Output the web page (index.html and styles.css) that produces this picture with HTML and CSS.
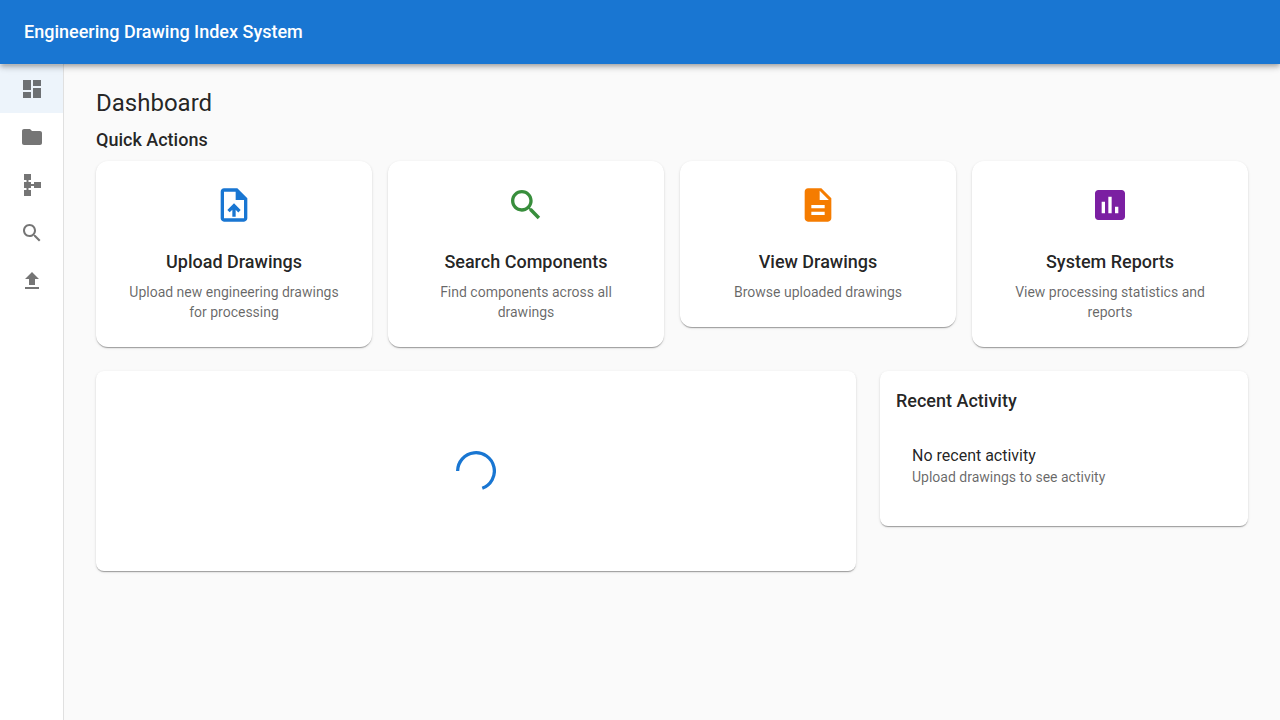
FILE: index.html
```html
<!DOCTYPE html>
<html lang="en">
<head>
  <meta charset="utf-8">
  <meta name="viewport" content="width=device-width, initial-scale=1">
  <title>Engineering Drawing Index System</title>
  <link rel="stylesheet" href="styles.css">
</head>
<body>
  <div class="app">
    <header class="app-bar">Engineering Drawing Index System</header>
    <div class="body">
      <nav class="sidebar" aria-label="Main">
        <a class="nav-item nav-item--active" href="#dashboard" aria-label="Dashboard">
          <svg class="nav-icon" viewBox="0 0 24 24"><path d="M3 13h8V3H3v10zm0 8h8v-6H3v6zm10 0h8V11h-8v10zm0-18v6h8V3h-8z"/></svg>
        </a>
        <a class="nav-item" href="#drawings" aria-label="Drawings">
          <svg class="nav-icon" viewBox="0 0 24 24"><path d="M10 4H4c-1.1 0-1.99.9-1.99 2L2 18c0 1.1.9 2 2 2h16c1.1 0 2-.9 2-2V8c0-1.1-.9-2-2-2h-8l-2-2z"/></svg>
        </a>
        <a class="nav-item" href="#flows" aria-label="Flows">
          <svg class="nav-icon" viewBox="0 0 24 24"><path d="M14 9v2h-3V9H8.5V7H11V1H4v6h2.5v2H4v6h2.5v2H4v6h7v-6H8.5v-2H11v-2h3v2h7V9h-7z"/></svg>
        </a>
        <a class="nav-item" href="#search" aria-label="Search">
          <svg class="nav-icon" viewBox="0 0 24 24"><path d="M15.5 14h-.79l-.28-.27C15.41 12.59 16 11.11 16 9.5 16 5.91 13.09 3 9.5 3S3 5.91 3 9.5 5.91 16 9.5 16c1.61 0 3.09-.59 4.23-1.57l.27.28v.79l5 4.99L20.49 19l-4.99-5zm-6 0C7.01 14 5 11.99 5 9.5S7.01 5 9.5 5 14 7.01 14 9.5 11.99 14 9.5 14z"/></svg>
        </a>
        <a class="nav-item" href="#upload" aria-label="Upload">
          <svg class="nav-icon" viewBox="0 0 24 24"><path d="M5 20h14v-2H5v2zm0-10h4v6h6v-6h4l-7-7-7 7z"/></svg>
        </a>
      </nav>

      <main class="main">
        <h1 class="page-title">Dashboard</h1>
        <h2 class="heading">Quick Actions</h2>

        <div class="actions">
          <a class="action" href="#upload">
            <svg class="action-icon action-icon--blue" viewBox="0 0 24 24"><path d="M14 2H6c-1.1 0-1.99.9-1.99 2L4 20c0 1.1.89 2 1.99 2H18c1.1 0 2-.9 2-2V8l-6-6zm4 18H6V4h7v5h5v11zM8 15.01l1.41 1.41L11 14.84V19h2v-4.16l1.59 1.59L16 15.01 12.01 11 8 15.01z"/></svg>
            <span class="action-title">Upload Drawings</span>
            <span class="caption">Upload new engineering drawings for processing</span>
          </a>
          <a class="action" href="#search">
            <svg class="action-icon action-icon--green" viewBox="0 0 24 24"><path d="M15.5 14h-.79l-.28-.27C15.41 12.59 16 11.11 16 9.5 16 5.91 13.09 3 9.5 3S3 5.91 3 9.5 5.91 16 9.5 16c1.61 0 3.09-.59 4.23-1.57l.27.28v.79l5 4.99L20.49 19l-4.99-5zm-6 0C7.01 14 5 11.99 5 9.5S7.01 5 9.5 5 14 7.01 14 9.5 11.99 14 9.5 14z"/></svg>
            <span class="action-title">Search Components</span>
            <span class="caption">Find components across all drawings</span>
          </a>
          <a class="action" href="#drawings">
            <svg class="action-icon action-icon--orange" viewBox="0 0 24 24"><path d="M14 2H6c-1.1 0-1.99.9-1.99 2L4 20c0 1.1.89 2 1.99 2H18c1.1 0 2-.9 2-2V8l-6-6zm2 16H8v-2h8v2zm0-4H8v-2h8v2zm-3-5V3.5L18.5 9H13z"/></svg>
            <span class="action-title">View Drawings</span>
            <span class="caption">Browse uploaded drawings</span>
          </a>
          <a class="action" href="#reports">
            <svg class="action-icon action-icon--purple" viewBox="0 0 24 24"><path d="M19 3H5c-1.1 0-2 .9-2 2v14c0 1.1.9 2 2 2h14c1.1 0 2-.9 2-2V5c0-1.1-.9-2-2-2zM9 17H7v-7h2v7zm4 0h-2V7h2v10zm4 0h-2v-4h2v4z"/></svg>
            <span class="action-title">System Reports</span>
            <span class="caption">View processing statistics and reports</span>
          </a>
        </div>

        <div class="panels">
          <section class="panel panel--loading" aria-busy="true">
            <svg class="spinner" viewBox="22 22 44 44" role="img" aria-label="Loading"><path d="M23.8 44A20.2 20.2 0 1 1 50.9 63"/></svg>
          </section>
          <section class="panel panel--activity">
            <h2 class="heading">Recent Activity</h2>
            <ul class="activity-list">
              <li class="activity">
                <span class="activity-title">No recent activity</span>
                <span class="caption">Upload drawings to see activity</span>
              </li>
            </ul>
          </section>
        </div>
      </main>
    </div>
  </div>
</body>
</html>
```
FILE: styles.css
```css
* {
  box-sizing: border-box;
}

body {
  margin: 0;
  background: #fafafa;
  color: rgba(0, 0, 0, 0.87);
  font-family: Roboto, "Liberation Sans", sans-serif;
  font-size: 16px;
  line-height: 24px;
  -webkit-font-smoothing: antialiased;
}

.app {
  display: flex;
  flex-direction: column;
  min-height: 100vh;
}

.app-bar {
  position: relative;
  z-index: 1;
  padding: 18px 24px;
  background: #1976d2;
  color: #fff;
  font-size: 18px;
  font-weight: 500;
  line-height: 28px;
  box-shadow: 0 2px 4px -1px rgba(0, 0, 0, 0.2),
    0 4px 5px 0 rgba(0, 0, 0, 0.14),
    0 1px 10px 0 rgba(0, 0, 0, 0.12);
}

.body {
  display: flex;
  flex: 1;
}

.sidebar {
  flex: none;
  width: 64px;
  padding-top: 1px;
  background: #fff;
  border-right: 1px solid rgba(0, 0, 0, 0.12);
}

.nav-item {
  display: flex;
  padding: 12px 20px;
}

.nav-item--active {
  background: rgba(25, 118, 210, 0.08);
}

.nav-icon {
  flex: none;
  width: 24px;
  height: 24px;
  fill: rgba(0, 0, 0, 0.54);
}

.main {
  flex: 1;
  min-width: 0;
  padding: 24px 32px;
}

.page-title {
  margin: 0 0 8px;
  font-size: 24px;
  font-weight: 400;
  line-height: 30px;
}

.heading {
  margin: 0;
  font-size: 18px;
  font-weight: 500;
  line-height: 28px;
}

.actions {
  display: grid;
  grid-template-columns: repeat(4, 1fr);
  align-items: start;
  gap: 16px;
  margin: 7px 0 24px;
}

.action,
.panel {
  background: #fff;
  box-shadow: 0 2px 1px -1px rgba(0, 0, 0, 0.2),
    0 1px 1px 0 rgba(0, 0, 0, 0.14),
    0 1px 3px 0 rgba(0, 0, 0, 0.12);
}

.action {
  display: flex;
  flex-direction: column;
  align-items: center;
  padding: 24px 24px 25px;
  border-radius: 12px;
  color: inherit;
  text-align: center;
  text-decoration: none;
}

.action-icon {
  width: 40px;
  height: 40px;
  margin-bottom: 23px;
}

.action-icon--blue {
  fill: #1976d2;
}

.action-icon--green {
  fill: #388e3c;
}

.action-icon--orange {
  fill: #f57c00;
}

.action-icon--purple {
  fill: #7b1fa2;
}

.action-title {
  margin-bottom: 6px;
  font-size: 18px;
  font-weight: 500;
  line-height: 28px;
}

.caption {
  color: rgba(0, 0, 0, 0.6);
  font-size: 14px;
  line-height: 20px;
}

.panels {
  display: grid;
  grid-template-columns: repeat(12, 1fr);
  align-items: start;
  gap: 24px;
}

.panel {
  border-radius: 8px;
}

.panel--loading {
  grid-column: span 8;
  display: flex;
  align-items: center;
  justify-content: center;
  min-height: 200px;
}

.panel--activity {
  grid-column: span 4;
  padding: 16px;
}

.spinner {
  width: 40px;
  height: 40px;
  fill: none;
  stroke: #1976d2;
  stroke-width: 3.6;
}

.activity-list {
  margin: 18px 0 0;
  padding: 8px 0;
  list-style: none;
}

.activity {
  display: flex;
  flex-direction: column;
  padding: 4px 16px 15px;
}

.activity-title {
  line-height: 22px;
}
```
